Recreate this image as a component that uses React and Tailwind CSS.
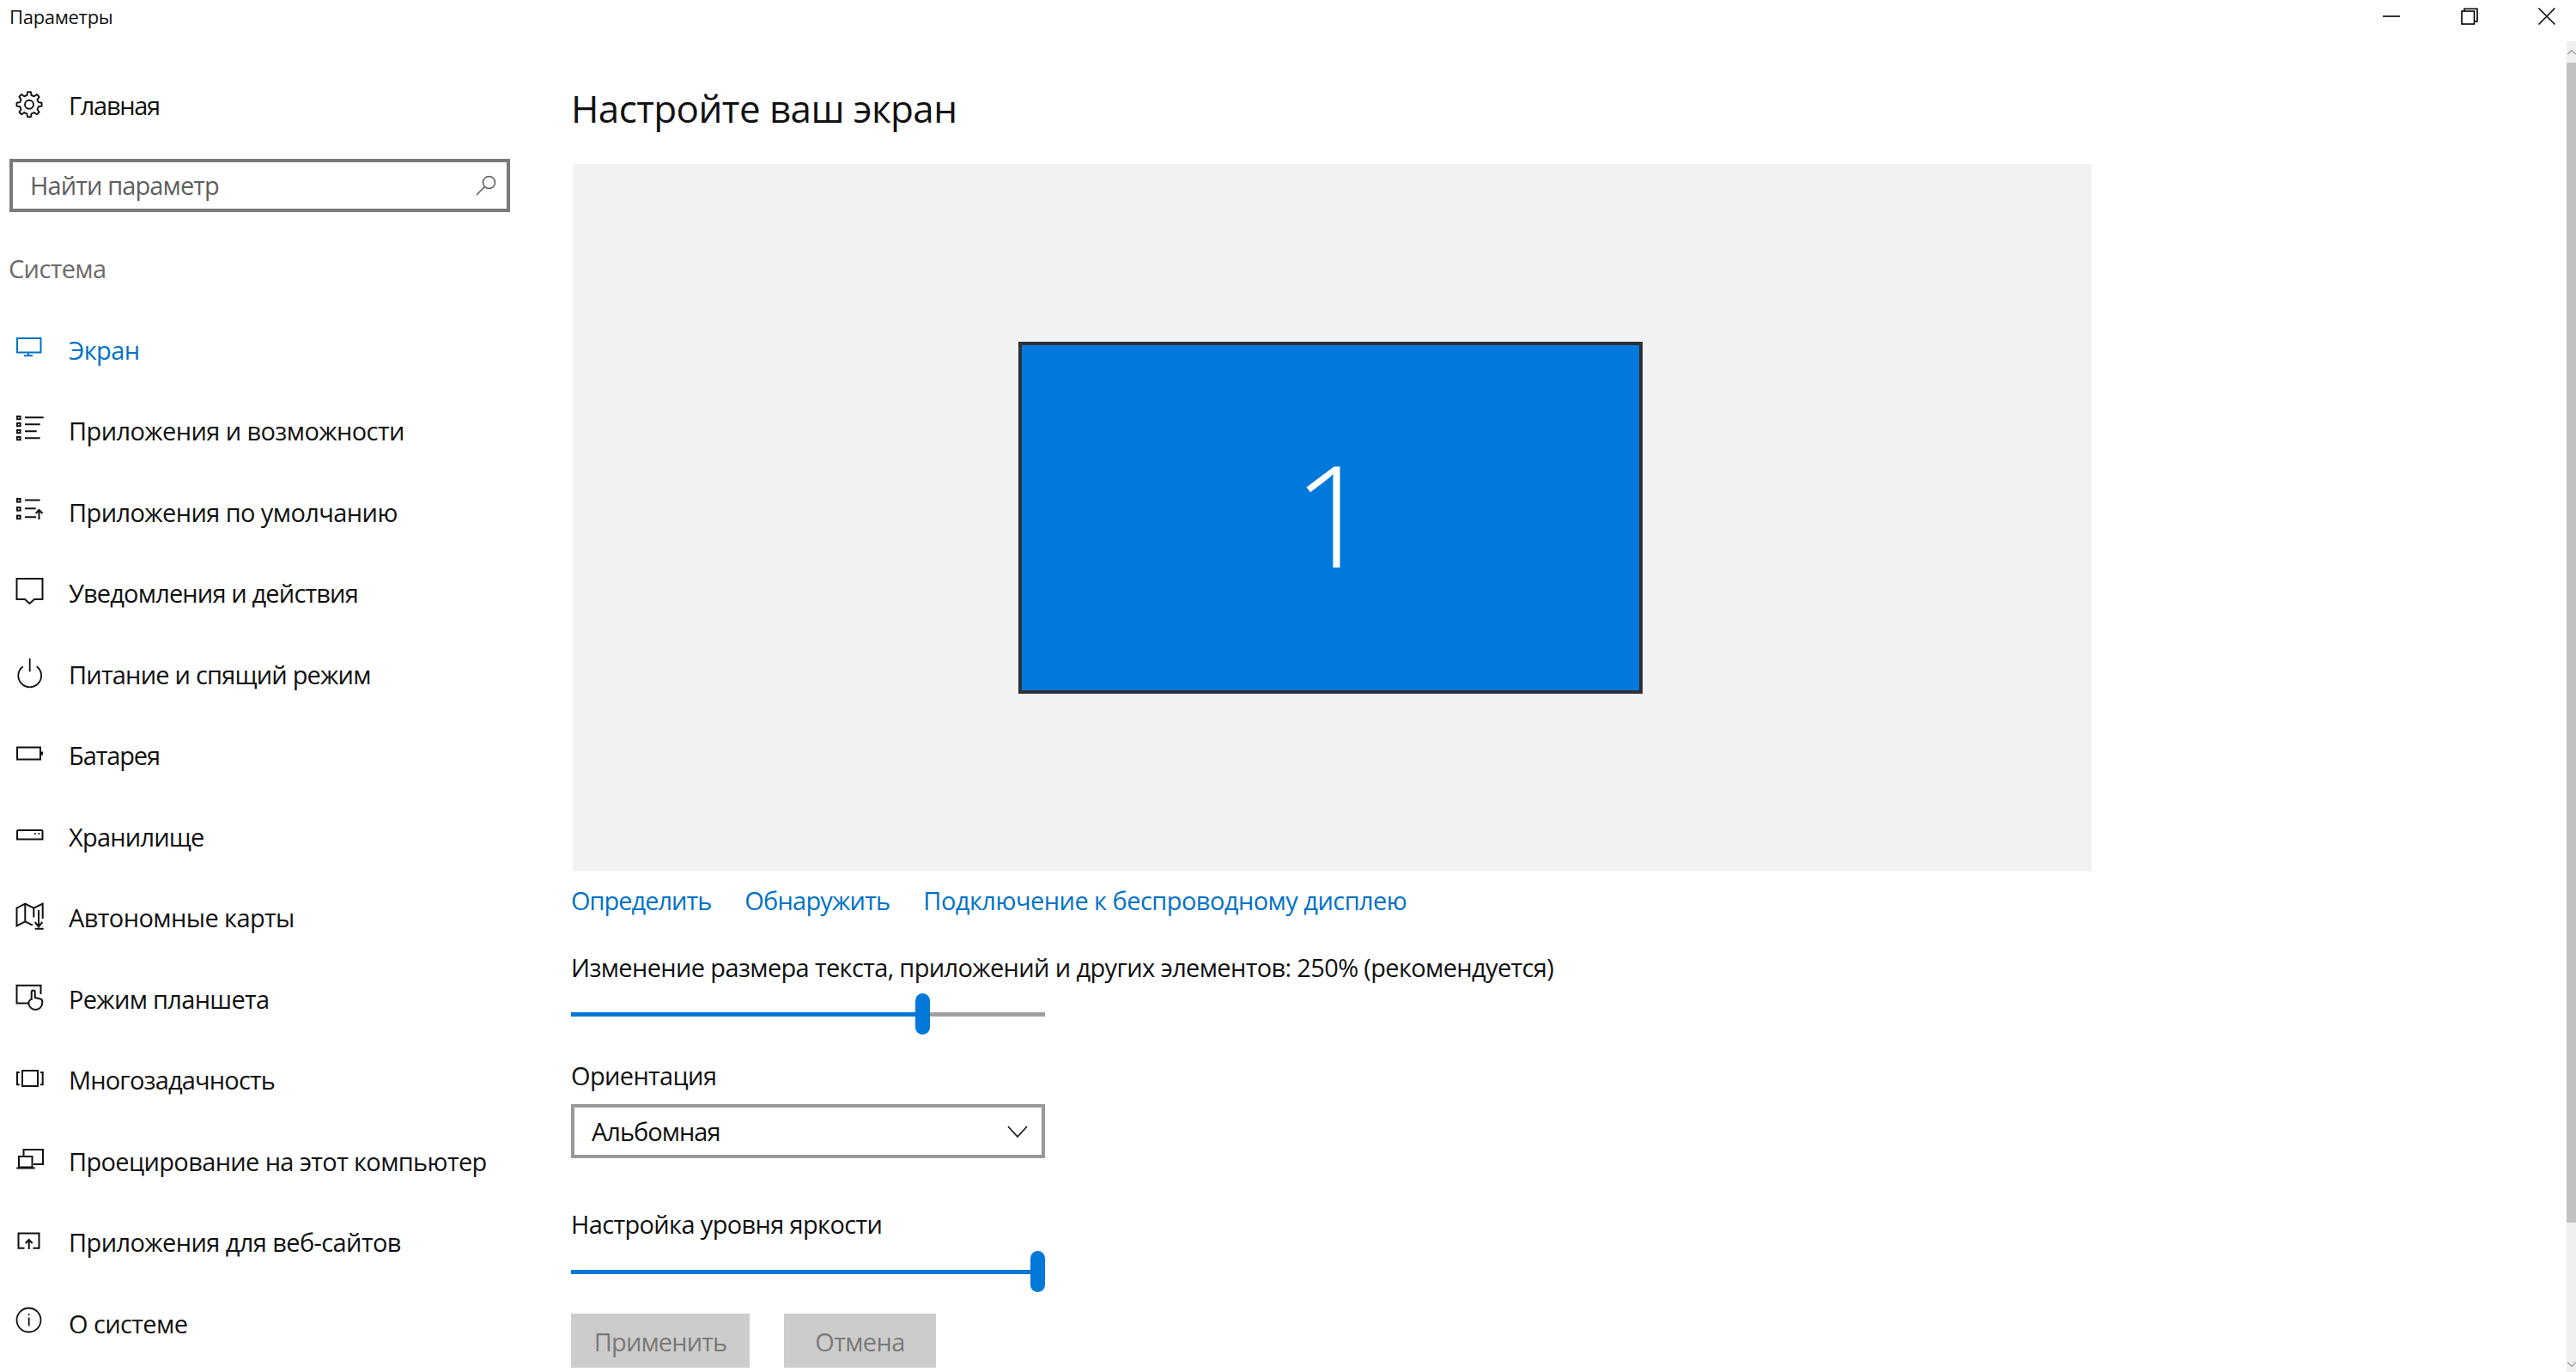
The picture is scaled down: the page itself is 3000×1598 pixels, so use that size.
import React from "react";

const gearPath = (() => {
  const cx = 16, cy = 17.7, teeth = 8, R = 14.6, r = 11;
  const pts = [];
  for (let i = 0; i < teeth; i++) {
    const a = (i / teeth) * Math.PI * 2 - Math.PI / 2;
    const step = (Math.PI * 2) / teeth;
    const p = (rad, ang) => `${(cx + rad * Math.cos(ang)).toFixed(2)} ${(cy + rad * Math.sin(ang)).toFixed(2)}`;
    pts.push(`${i === 0 ? "M" : "L"}${p(R, a - step * 0.17)}`);
    pts.push(`A${R} ${R} 0 0 1 ${p(R, a + step * 0.17)}`);
    pts.push(`L${p(r, a + step * 0.3)}`);
    pts.push(`A${r} ${r} 0 0 1 ${p(r, a + step * 0.7)}`);
  }
  return pts.join(" ") + " Z";
})();

const Ico = ({ children, sw = 2 }) => (
  <svg viewBox="0 0 34 34" className="w-[34px] h-[34px] shrink-0 -translate-y-[2px] overflow-visible" fill="none" stroke="currentColor" strokeWidth={sw}>
    {children}
  </svg>
);

const icons = {
  home: (
    <Ico sw={1.9}>
      <path d={gearPath} strokeLinejoin="round" />
      <circle cx="16" cy="17.7" r="5" />
    </Ico>
  ),
  display: (
    <Ico>
      <rect x="2" y="6" width="27.5" height="16.5" />
      <path d="M15 22.5V26M10 26.2H20" />
    </Ico>
  ),
  apps: (
    <Ico>
      <rect x="2" y="2" width="3.6" height="3.2" />
      <rect x="2" y="10" width="3.6" height="3.2" />
      <rect x="2" y="18" width="3.6" height="3.2" />
      <rect x="2" y="26" width="3.6" height="3.2" />
      <path d="M11 3.3H32.7M11 11.3H28.7M11 19.3H24.7M11 27.3H28.7" />
    </Ico>
  ),
  defaults: (
    <Ico>
      <rect x="2" y="4" width="3.6" height="3.6" />
      <rect x="2" y="14" width="3.6" height="3.6" />
      <rect x="2" y="23.6" width="3.6" height="3.6" />
      <path d="M11 5.5H28.7M11 15.2H23.7M11 25.2H24M27.5 17V28M23.7 21L27.5 17L31.5 21" />
    </Ico>
  ),
  notify: (
    <Ico>
      <path d="M1.5 2H31.5V26H22L16.5 31L11 26H1.5Z" />
    </Ico>
  ),
  power: (
    <Ico sw={1.8}>
      <path d="M8.7 10.2A13.4 13.4 0 1 0 24.7 10.2M16.7 .8V16.2" />
    </Ico>
  ),
  battery: (
    <Ico>
      <rect x="2" y="9.5" width="27" height="14" />
      <rect x="29.5" y="14.5" width="2.5" height="4" fill="currentColor" stroke="none" />
    </Ico>
  ),
  storage: (
    <Ico>
      <path d="M2 22.5V13Q2 12 3 12H30Q31.5 12 31.5 13V22.5Z" />
      <circle cx="23" cy="16" r="1.1" fill="currentColor" stroke="none" />
      <circle cx="27.3" cy="16" r="1.1" fill="currentColor" stroke="none" />
    </Ico>
  ),
  maps: (
    <Ico>
      <path d="M21.3 18.5V7.7L11.3 2.7L1.5 7.7V28.3L11.3 23.3L20 27.6M11.3 2.7V23.3M21.3 7.7L31.7 2.7V20M27 10V29M22.7 24L27 29.3L31.3 24M22.7 31.8H32.7" />
    </Ico>
  ),
  tablet: (
    <Ico>
      <path d="M15 24.5H1.5V3.8H29.5V14" />
      <path d="M18.7 21V11.5A2 2 0 0 1 22.7 11.5V18L28.5 19.3A3.4 3.4 0 0 1 31.3 22.6V24A8 8 0 0 1 15.3 24Q15.3 21.5 18.7 19.5" />
    </Ico>
  ),
  multi: (
    <Ico>
      <rect x="8" y="8" width="18" height="18" />
      <path d="M4.7 10H2V24.3H4.7M29 10H31.7V24.3H29" />
    </Ico>
  ),
  project: (
    <Ico>
      <path d="M9.5 13V6H32V23H21" />
      <rect x="4" y="14" width="15.5" height="12.5" />
      <path d="M1.3 27.5H22.7" />
    </Ico>
  ),
  web: (
    <Ico>
      <path d="M10.5 25.8H3.5V8.5H27.5V25.8H20.5M15.7 27V16M11.7 20L15.7 16L19.7 20" />
    </Ico>
  ),
  about: (
    <Ico sw={1.8}>
      <circle cx="15.5" cy="15.5" r="14" />
      <path d="M15.7 12.5V22.5" />
      <circle cx="15.7" cy="9" r="1.1" fill="currentColor" stroke="none" />
    </Ico>
  ),
};

const nav = [
  ["Экран", "display", "tracking-[-0.6px]"],
  ["Приложения и возможности", "apps", "tracking-[-0.6px]"],
  ["Приложения по умолчанию", "defaults", "tracking-[-0.6px]"],
  ["Уведомления и действия", "notify", "tracking-[-0.85px]"],
  ["Питание и спящий режим", "power", "tracking-[-0.8px]"],
  ["Батарея", "battery", "tracking-[-1.1px]"],
  ["Хранилище", "storage", "tracking-[-0.8px]"],
  ["Автономные карты", "maps", "tracking-[-0.6px]"],
  ["Режим планшета", "tablet", "tracking-[-0.7px]"],
  ["Многозадачность", "multi", "tracking-[-0.85px]"],
  ["Проецирование на этот компьютер", "project", "tracking-[-0.65px]"],
  ["Приложения для веб-сайтов", "web", "tracking-[-0.6px]"],
  ["О системе", "about", "tracking-[-0.6px]"],
];

const Slider = ({ pct, thumbLeft }) => (
  <div className="relative w-[552px] h-[48px] flex items-center">
    <div className="w-full h-[5px] bg-[#a0a0a0] flex">
      <div className="h-full bg-[#0078d7]" style={{ width: `${pct}%` }} />
    </div>
    <div className="absolute top-0 w-[17px] h-[48px] rounded-full bg-[#0078d7]" style={{ left: thumbLeft }} />
  </div>
);

export default function App() {
  return (
    <div className="w-[3000px] h-[1598px] bg-white flex flex-col overflow-hidden text-[#111] font-['Open_Sans','Noto_Sans',sans-serif] text-[29px] tracking-[-0.65px]">
      <div className="h-[49px] shrink-0 flex items-start justify-between">
        <div className="pl-[11px] pt-[3px] text-[22px] leading-[32px] tracking-[-0.3px]">Параметры</div>
        <div className="flex items-start pt-[9px] pr-[24px] text-black">
          <svg viewBox="0 0 20 20" className="w-[20px] h-[20px]" fill="none" stroke="currentColor" strokeWidth="1.6"><path d="M0 10H20" /></svg>
          <svg viewBox="0 0 20 20" className="w-[20px] h-[20px] ml-[71px]" fill="none" stroke="currentColor" strokeWidth="1.6"><rect x="1" y="4" width="14.5" height="15" /><path d="M4 4V1.2H19V16H15.5" /></svg>
          <svg viewBox="0 0 20 20" className="w-[20px] h-[20px] ml-[70px]" fill="none" stroke="currentColor" strokeWidth="1.5"><path d="M.5 .5L19.5 19.5M19.5 .5L.5 19.5" /></svg>
        </div>
      </div>

      <div className="flex-1 flex min-h-0">
        <aside className="w-[665px] shrink-0">
          <div className="h-[76px] mt-[36px] pl-[18px] flex items-center gap-[28px]">
            {icons.home}
            <span className="tracking-[-1.3px]">Главная</span>
          </div>
          <div className="ml-[11px] mt-[24px] w-[583px] h-[62px] border-[4px] border-[#7a7a7a] flex items-center justify-between pl-[20px] pr-[12px] text-[#5f5f5f]">
            <span className="tracking-[-0.9px]">Найти параметр</span>
            <svg viewBox="0 0 24 24" className="w-[24px] h-[24px]" fill="none" stroke="currentColor" strokeWidth="1.6"><circle cx="15.5" cy="8.5" r="7" /><path d="M10.5 13.5L1 23" /></svg>
          </div>
          <div className="h-[113px] pl-[10px] pt-[19px] flex items-center text-[#6b6b6b]">Система</div>
          <nav className="flex flex-col">
            {nav.map(([label, ic, tr], i) => (
              <div key={label} className={`h-[94.5px] pl-[18px] flex items-center gap-[28px] ${i === 0 ? "text-[#0072c6]" : ""}`}>
                {icons[ic]}
                <span className={tr}>{label}</span>
              </div>
            ))}
          </nav>
        </aside>

        <main className="flex-1 min-w-0 pt-[40px]">
          <h1 className="h-[76px] leading-[74px] text-[44px] font-normal tracking-[-0.6px]">Настройте ваш экран</h1>
          <div className="mt-[26px] ml-[2px] w-[1769px] h-[824px] bg-[#f2f2f2] flex items-center justify-center pr-[5px]">
            <div className="w-[727px] h-[410px] bg-[#0078dc] border-[4px] border-[#2d3136] flex items-center justify-center text-white text-[165px] font-light leading-none tracking-normal pb-[12px] pl-[7px]">1</div>
          </div>
          <div className="h-[67px] flex items-center text-[#0072c6]">
            <span className="tracking-[-1px]">Определить</span>
            <span className="ml-[39px] tracking-[-0.8px]">Обнаружить</span>
            <span className="ml-[39px] tracking-[-0.55px]">Подключение к беспроводному дисплею</span>
          </div>
          <div className="mt-[22px] h-[46px] leading-[46px]">Изменение размера текста, приложений и других элементов: 250% (рекомендуется)</div>
          <div className="mt-[7px]"><Slider pct={73} thumbLeft={401} /></div>
          <div className="mt-[28px] h-[40px] leading-[40px]">Ориентация</div>
          <div className="mt-[13px] w-[552px] h-[63px] border-[4px] border-[#999] flex items-center justify-between pl-[20px] pr-[16px]">
            <span className="tracking-[-1px]">Альбомная</span>
            <svg viewBox="0 0 24 14" className="w-[24px] h-[14px]" fill="none" stroke="currentColor" strokeWidth="1.6"><path d="M1 1L12 13L23 1" /></svg>
          </div>
          <div className="mt-[57px] h-[40px] leading-[40px]">Настройка уровня яркости</div>
          <div className="mt-[11px]"><Slider pct={100} thumbLeft={535} /></div>
          <div className="mt-[25px] flex gap-[40px] text-[#7a7a7a]">
            <div className="w-[208px] h-[63px] bg-[#ccc] flex items-center justify-center pt-[2px] tracking-[-0.9px]">Применить</div>
            <div className="w-[177px] h-[63px] bg-[#ccc] flex items-center justify-center pt-[2px]">Отмена</div>
          </div>
        </main>

        <div className="w-[11px] shrink-0 -mt-[1px] bg-[#f0f0f0] flex flex-col">
          <div className="h-[25px] shrink-0 flex items-center justify-center">
            <svg viewBox="0 0 10 6" className="w-[10px] h-[6px]" fill="none" stroke="#606060" strokeWidth="1"><path d="M0 5.5L5 .5L10 5.5" /></svg>
          </div>
          <div className="h-[1351px] shrink-0 bg-[#c2c2c2]" />
          <div className="flex-1 flex items-end justify-center pb-[6px]">
            <svg viewBox="0 0 10 6" className="w-[10px] h-[6px]" fill="none" stroke="#606060" strokeWidth="1"><path d="M0 .5L5 5.5L10 .5" /></svg>
          </div>
        </div>
      </div>
    </div>
  );
}
